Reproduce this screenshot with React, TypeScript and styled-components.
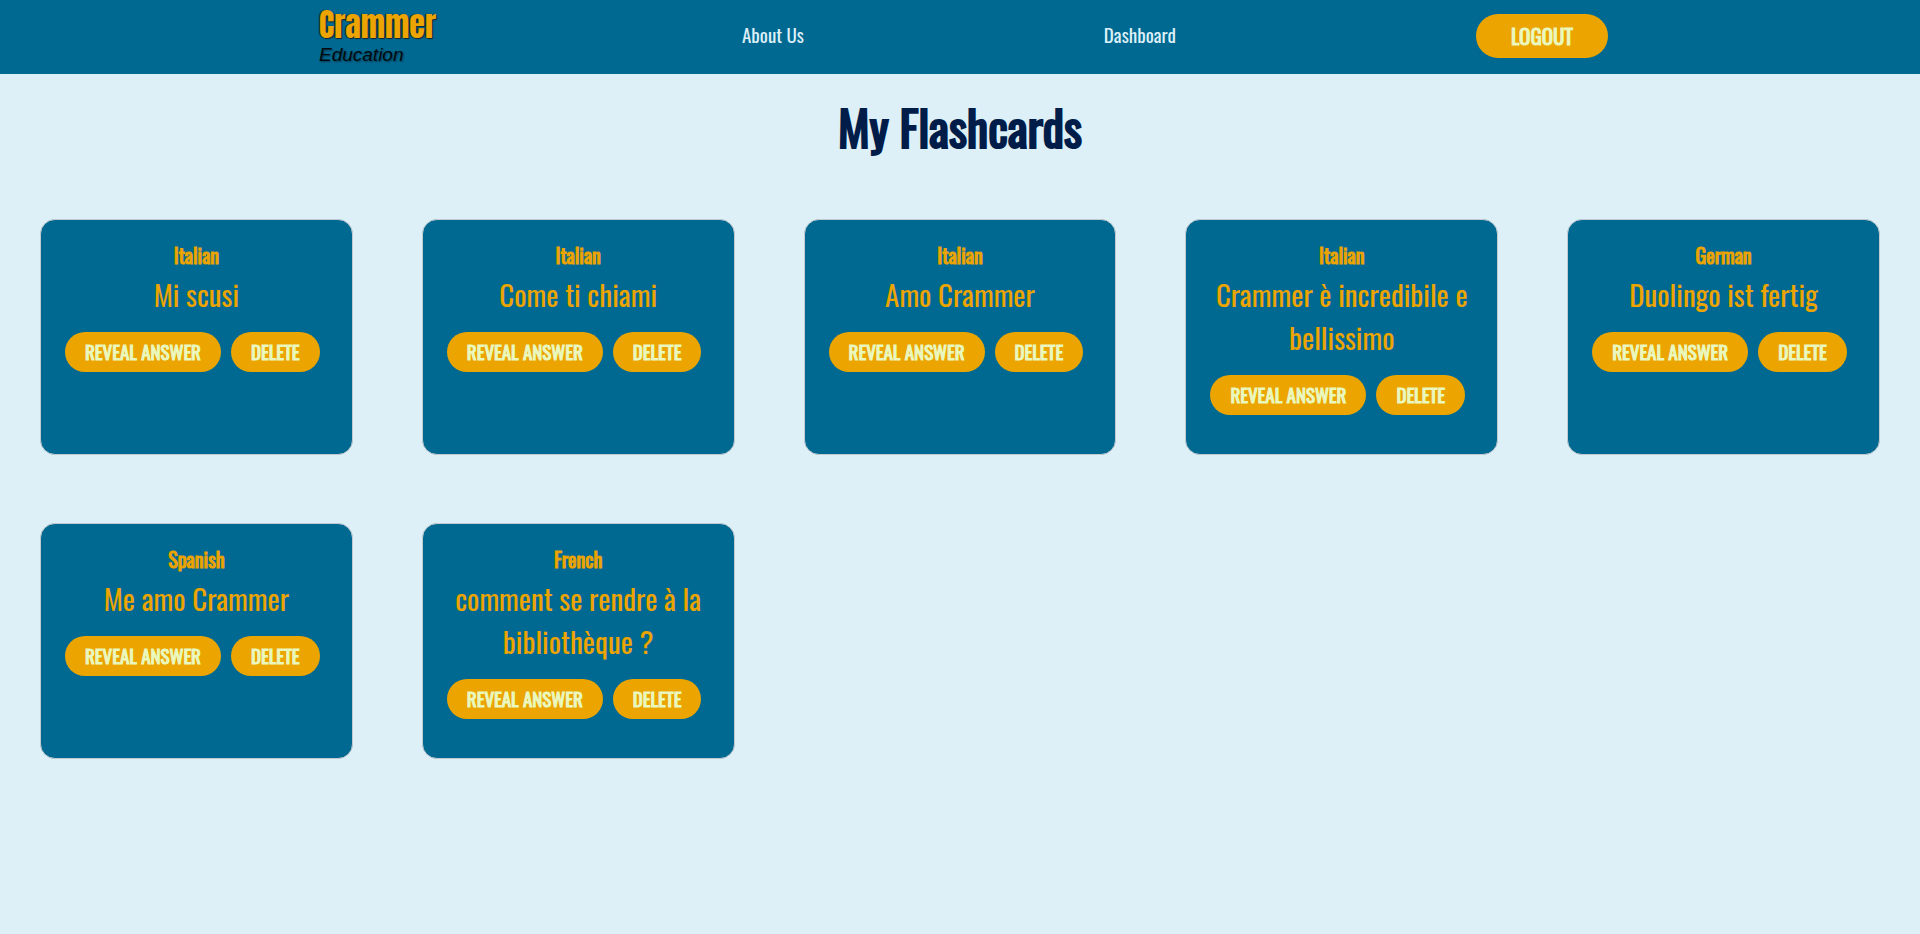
import React from "react";
import styled, { createGlobalStyle } from "styled-components";

const GlobalStyle = createGlobalStyle`
  *, *::before, *::after { box-sizing: border-box; }
  body {
    margin: 0;
    background: #ddf0f7;
    font-family: Oswald, "Liberation Sans Narrow", "Liberation Sans", sans-serif;
    font-weight: 400;
  }
`;

const Header = styled.header`
  height: 74px;
  padding: 0 12px 2px;
  display: flex;
  justify-content: space-evenly;
  align-items: center;
  background: #006992;
`;

const Logo = styled.a`
  width: 130px;
  padding: 2px 0 0 7px;
  display: flex;
  flex-direction: column;
  text-decoration: none;
`;

const LogoName = styled.span`
  color: #eca400;
  font-family: Anton, Oswald, "Liberation Sans Narrow", sans-serif;
  font-size: 32px;
  line-height: 36px;
  text-shadow: 1px 1px 1px #10242e, -1px 0 1px #10242e;
`;

const LogoTag = styled.span`
  color: #020a0e;
  font-family: "Liberation Sans", Arial, sans-serif;
  font-size: 19px;
  line-height: 24px;
  font-style: italic;
  text-shadow: 1px 1px 2px #00384e;
`;

const NavLink = styled.a`
  padding-bottom: 4px;
  color: #ddf0f7;
  font-size: 19px;
  line-height: 24px;
  text-decoration: none;
`;

const PillButton = styled.button<{ $large?: boolean }>`
  width: ${({ $large }) => ($large ? "132px" : "auto")};
  height: ${({ $large }) => ($large ? "44px" : "40px")};
  padding: 0 20px 2px;
  border: 0;
  border-radius: 22px;
  background: #eca400;
  color: #eaf8bf;
  font-family: inherit;
  font-size: ${({ $large }) => ($large ? "21px" : "19px")};
  font-weight: 400;
  -webkit-text-stroke: 1px #eaf8bf;
  white-space: nowrap;
  text-transform: uppercase;
  cursor: pointer;
`;

const Title = styled.h1`
  margin: 0;
  padding: 19px 0 59px;
  color: #001d4a;
  font-size: 48px;
  line-height: 67px;
  font-weight: 400;
  -webkit-text-stroke: 2px #001d4a;
  text-align: center;
`;

const CardGrid = styled.main`
  padding: 0 40px 70px;
  display: grid;
  grid-template-columns: repeat(auto-fill, minmax(300px, 1fr));
  gap: 68px 69px;
`;

const Card = styled.article`
  min-height: 236px;
  padding: 23px 24px;
  border: 1px solid #c3c9ce;
  border-radius: 15px;
  background: #006992;
  color: #eca400;
`;

const Language = styled.h2`
  margin: 0 0 5px;
  font-size: 20px;
  line-height: 24px;
  font-weight: 400;
  -webkit-text-stroke: 1px #eca400;
  text-align: center;
`;

const Phrase = styled.p`
  margin: 0 0 17px;
  font-size: 29px;
  line-height: 43px;
  text-align: center;
`;

const Actions = styled.div`
  display: flex;
  gap: 10px;
`;

const cards = [
  { language: "Italian", phrase: "Mi scusi" },
  { language: "Italian", phrase: "Come ti chiami" },
  { language: "Italian", phrase: "Amo Crammer" },
  { language: "Italian", phrase: "Crammer è incredibile e bellissimo" },
  { language: "German", phrase: "Duolingo ist fertig" },
  { language: "Spanish", phrase: "Me amo Crammer" },
  { language: "French", phrase: "comment se rendre à la bibliothèque ?" },
];

export default function App() {
  return (
    <>
      <GlobalStyle />
      <Header>
        <Logo href="#">
          <LogoName>Crammer</LogoName>
          <LogoTag>Education</LogoTag>
        </Logo>
        <NavLink href="#about">About Us</NavLink>
        <NavLink href="#dashboard">Dashboard</NavLink>
        <PillButton $large type="button">Logout</PillButton>
      </Header>
      <Title>My Flashcards</Title>
      <CardGrid>
        {cards.map(({ language, phrase }) => (
          <Card key={phrase}>
            <Language>{language}</Language>
            <Phrase>{phrase}</Phrase>
            <Actions>
              <PillButton type="button">Reveal answer</PillButton>
              <PillButton type="button">Delete</PillButton>
            </Actions>
          </Card>
        ))}
      </CardGrid>
    </>
  );
}
